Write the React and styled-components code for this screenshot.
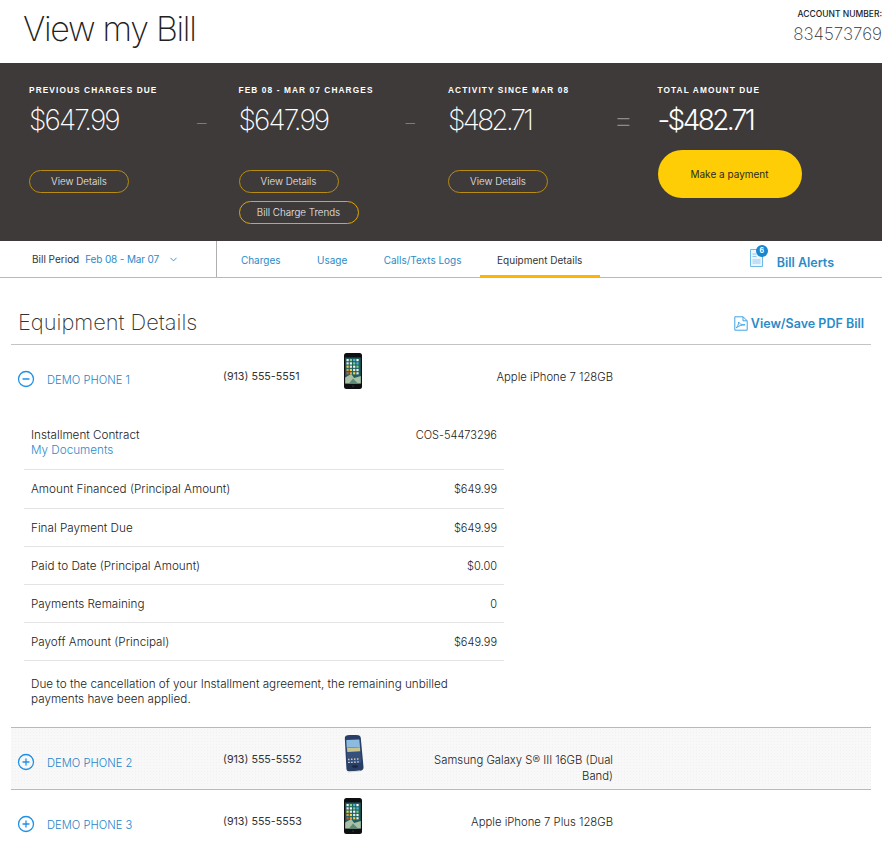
import { createGlobalStyle } from "styled-components";
import styled from "styled-components";
import { ChevronDown, CircleMinus, CirclePlus } from "lucide-react";

const GlobalStyle = createGlobalStyle`
  html, body {
    margin: 0;
    background: #fff;
    color: #333;
    font-family: Inter, "Liberation Sans", sans-serif;
    font-size: 12px;
    overflow-x: hidden;
  }
  * { box-sizing: border-box; }
`;

const BLUE = "#2a8bc9";

const Header = styled.header`
  height: 63px;
  padding-left: 23px;
  display: flex;
  justify-content: space-between;
`;
const Title = styled.h1`
  margin: 9px 0 0;
  font-size: 34px;
  line-height: 40px;
  letter-spacing: -1.3px;
  font-weight: 200;
  color: #222;
`;
const Account = styled.div`
  padding-top: 9px;
  text-align: right;
  width: 100px;
`;
const AccountLabel = styled.div`
  font-size: 8.5px;
  line-height: 11px;
  font-weight: 500;
  color: #222;
  white-space: nowrap;
`;
const AccountNumber = styled.div`
  margin-top: 4px;
  font-size: 17px;
  line-height: 20px;
  font-weight: 200;
  color: #333;
`;

const Summary = styled.section`
  height: 178px;
  background: #3e3a39;
  padding: 21px 0 0 29px;
  display: grid;
  grid-template-columns: repeat(4, 209.5px);
`;
const SummaryCol = styled.div`
  position: relative;
  display: flex;
  flex-direction: column;
  align-items: flex-start;
`;
const SummaryLabel = styled.div`
  font-family: "Liberation Sans", sans-serif;
  font-size: 8.3px;
  line-height: 12px;
  font-weight: 700;
  letter-spacing: 1.1px;
  color: #fff;
  white-space: nowrap;
`;
const Amount = styled.div`
  margin-top: 6px;
  height: 44px;
  font-size: 28px;
  line-height: 36px;
  letter-spacing: ${(p) => p.$spacing}px;
  font-weight: ${(p) => (p.$strong ? 300 : 200)};
  color: #fff;
`;
const Operator = styled.span`
  position: absolute;
  top: ${(p) => p.$top}px;
  left: ${(p) => p.$left}px;
  font-size: ${(p) => p.$size}px;
  line-height: 36px;
  font-weight: 200;
  color: #8d8a89;
`;
const OutlineButton = styled.button`
  width: ${(p) => p.$width}px;
  height: 23px;
  margin-top: ${(p) => p.$top}px;
  border: 1px solid ${(p) => (p.$bright ? "#e0a800" : "#b88c12")};
  border-radius: 12px;
  background: transparent;
  color: #eee;
  font: 300 9.8px/20px Inter, "Liberation Sans", sans-serif;
  padding: 0;
`;
const PayButton = styled.button`
  width: 144px;
  height: 48px;
  margin-top: 4px;
  border: 0;
  border-radius: 24px;
  background: #ffcd05;
  color: #2d2a20;
  font: 400 10px/48px Inter, "Liberation Sans", sans-serif;
  padding: 0;
`;

const Nav = styled.nav`
  height: 37px;
  border-bottom: 1px solid #b9b9b9;
  display: flex;
  font-size: 10px;
`;
const Period = styled.div`
  width: 217px;
  border-right: 1px solid #b0b0b0;
  padding-left: 32px;
  display: flex;
  align-items: center;
  gap: 6px;
  color: #333;
`;
const PeriodValue = styled.span`
  color: ${BLUE};
  margin-right: 3px;
  letter-spacing: -0.15px;
`;
const Tabs = styled.div`
  display: flex;
  padding-left: 5.7px;
`;
const Tab = styled.a`
  padding: 0 18.2px;
  margin-bottom: -1px;
  display: flex;
  align-items: center;
  justify-content: center;
  height: 37px;
  border-top: 3px solid transparent;
  width: ${(p) => (p.$width ? `${p.$width}px` : "auto")};
  color: ${(p) => (p.$active ? "#333" : BLUE)};
  border-bottom: 3px solid ${(p) => (p.$active ? "#ffb400" : "transparent")};
  white-space: nowrap;
`;
const Alerts = styled.a`
  margin-left: 150px;
  display: flex;
  align-items: center;
  gap: 14px;
  color: ${BLUE};
  font-size: 12.5px;
  font-weight: 600;
  padding-top: 6px;
`;
const AlertIcon = styled.span`
  position: relative;
  display: block;
  width: 13px;
  height: 18px;
  margin-top: -8px;
`;
const AlertBadge = styled.span`
  position: absolute;
  top: -4px;
  left: 6px;
  width: 12px;
  height: 12px;
  border-radius: 50%;
  background: #1a86d0;
  color: #fff;
  font-size: 7px;
  line-height: 12px;
  font-weight: 700;
  text-align: center;
`;

const Main = styled.main`
  margin: 0 11px;
`;
const SectionHead = styled.div`
  height: 67px;
  border-bottom: 1px solid #c4c4c4;
  padding: 22px 7px 0;
  display: flex;
  align-items: center;
  justify-content: space-between;
`;
const SectionTitle = styled.h2`
  margin: 0;
  font-size: 21.8px;
  font-weight: 200;
  color: #333;
`;
const PdfLink = styled.a`
  display: flex;
  align-items: center;
  gap: 3px;
  padding-top: 2px;
  color: ${BLUE};
  font-size: 12.5px;
  font-weight: 600;
`;

const PhoneRow = styled.div`
  display: grid;
  grid-template-columns: 29px 176px 121px 76px 193px;
  align-items: start;
  padding: 8px 0 0 7px;
  min-height: ${(p) => p.$height}px;
  ${(p) => p.$shaded && `
    background-color: #f8f8f8;
    background-image: radial-gradient(#f1f1f1 0.6px, transparent 0.7px);
    background-size: 3px 3px;
    border-top: 1px solid #b9b9b9;
    border-bottom: 1px solid #b9b9b9;
  `}
`;
const Toggle = styled.span`
  margin: 17px 0 0 -1px;
  color: #1e90e6;
  display: block;
  line-height: 0;
`;
const PhoneName = styled.a`
  margin-top: 19px;
  line-height: 16px;
  font-size: 11.2px;
  font-weight: 300;
  color: #1f84c8;
`;
const PhoneNumber = styled.div`
  margin-top: 16px;
  line-height: 16px;
  font-size: 10.7px;
`;
const Device = styled.div`
  margin-top: 16px;
  line-height: 16px;
  font-size: 11.3px;
  font-weight: 300;
  color: #222;
  text-align: right;
`;
const PhoneImage = styled.div`
  margin-top: ${(p) => p.$offset || 0}px;
  line-height: 0;
`;

const Details = styled.div`
  width: 480px;
  margin-left: 13px;
`;
const DetailRow = styled.div`
  display: flex;
  justify-content: space-between;
  align-items: ${(p) => (p.$top ? "flex-start" : "center")};
  height: ${(p) => p.$height || 38}px;
  padding: ${(p) => (p.$top ? "21px 7px 0" : "0 7px")};
  border-bottom: 1px solid #e4e4e4;
  line-height: 16px;
  font-size: 11.7px;
  font-weight: 300;
  color: #222;
`;
const DetailValue = styled.span`
  font-size: 11px;
`;
const DocLink = styled.a`
  display: block;
  margin-top: -1px;
  color: ${BLUE};
`;
const Note = styled.p`
  margin: 0;
  width: 440px;
  padding: 16px 0 20px 7px;
  font-size: 11.7px;
  font-weight: 300;
  line-height: 15px;
  color: #222;
`;

function PdfIcon() {
  return (
    <svg width="14" height="15" viewBox="0 0 14 15" fill="none" stroke="#3fa4e6" strokeWidth="1">
      <path d="M.8.8h8.400l4 4v9.400H.8z" />
      <path d="M9 .8v4h4" />
      <path d="M2 12c1.600-1.400 2.600-3.600 2.600-6 .8 1.600 2 2.600 6.400 2.800-3 .1-6.300.8-9 3.200z" />
    </svg>
  );
}

function BillIcon() {
  return (
    <svg width="13" height="18" viewBox="0 0 13 18">
      <path d="M.5.5h9l3 3v14H.5z" fill="#eaf5fc" stroke="#6db9ea" />
      <path d="M2.500 5h4M2.500 7.500h4" stroke="#8cc8ee" />
      <rect x="2.500" y="10" width="8" height="5" fill="#bfe0f5" />
    </svg>
  );
}

const APP_COLORS = ["#f4f4f4", "#e8a13a", "#4fb6e8", "#e9e9e9", "#d9534a", "#7fd08a", "#f2d04a", "#ffffff"];

function IPhone() {
  const apps = [];
  for (let r = 0; r < 5; r++) {
    for (let c = 0; c < 4; c++) {
      apps.push(
        <rect
          key={`${r}-${c}`}
          x={2.5 + c * 3.3}
          y={6 + r * 3.3}
          width="2.2"
          height="2.2"
          fill={APP_COLORS[(r * 3 + c * 5) % APP_COLORS.length]}
        />
      );
    }
  }
  return (
    <svg width="18" height="36" viewBox="0 0 18 36">
      <rect x="0" y="0" width="18" height="36" rx="2.5" fill="#0e0f12" />
      <rect x="1.2" y="4.5" width="15.6" height="26" fill="#1f5f5c" />
      <path d="M1.2 30.500v-6l6-3.500 3 4 6.600-2v7.500z" fill="#a9bfa6" />
      <path d="M5 30.500l4-5 5 5z" fill="#5e8a78" />
      {apps}
      <circle cx="9" cy="33.2" r="1" fill="#2a2b30" />
    </svg>
  );
}

function GalaxyPhone() {
  return (
    <svg width="20" height="38" viewBox="0 0 20 38">
      <path d="M.8 3C.8 1 2.500 0 5.500 0h7c3 0 4 1 4.300 3l2.700 29c.2 2-1 3.500-3.500 3.700l-10 .8c-2.500.2-3.500-1-3.600-3z" fill="#2a3f66" />
      <path d="M2.300 5l13-.6 2 23-13.800.8z" fill="#34507c" />
      <path d="M2.300 5l13-.6.7 7.600-13.300.8z" fill="#8dbbe0" />
      <path d="M3 13l13-.8.3 4-13 .8z" fill="#c6c48c" />
      <path d="M4 24.500l12-.7" stroke="#f0c48a" strokeWidth="1.5" strokeDasharray="1.5 1.5" />
      <path d="M4.200 27.500l12-.7" stroke="#e6edf3" strokeWidth="1.2" strokeDasharray="1.5 1.5" />
      <ellipse cx="11" cy="31.5" rx="3" ry="1.2" fill="#18263f" />
      <path d="M4 37l12-1" stroke="#d6d6d6" strokeWidth="1" />
    </svg>
  );
}

const details = [
  ["Amount Financed (Principal Amount)", "$649.99", 39],
  ["Final Payment Due", "$649.99", 38],
  ["Paid to Date (Principal Amount)", "$0.00", 38],
  ["Payments Remaining", "0", 38],
  ["Payoff Amount (Principal)", "$649.99", 38],
];

export default function App() {
  return (
    <>
      <GlobalStyle />
      <Header>
        <Title>View my Bill</Title>
        <Account>
          <AccountLabel>ACCOUNT NUMBER:</AccountLabel>
          <AccountNumber>834573769</AccountNumber>
        </Account>
      </Header>

      <Summary>
        <SummaryCol>
          <SummaryLabel>PREVIOUS CHARGES DUE</SummaryLabel>
          <Amount $spacing={-1.9}>$647.99</Amount>
          <Operator $left={168} $top={21} $size={19}>–</Operator>
          <OutlineButton $width={100} $top={24}>View Details</OutlineButton>
        </SummaryCol>
        <SummaryCol>
          <SummaryLabel>FEB 08 - MAR 07 CHARGES</SummaryLabel>
          <Amount $spacing={-1.9}>$647.99</Amount>
          <Operator $left={167} $top={21} $size={19}>–</Operator>
          <OutlineButton $width={100} $top={24}>View Details</OutlineButton>
          <OutlineButton $width={120} $top={8} $bright>Bill Charge Trends</OutlineButton>
        </SummaryCol>
        <SummaryCol>
          <SummaryLabel>ACTIVITY SINCE MAR 08</SummaryLabel>
          <Amount $spacing={-2.7}>$482.71</Amount>
          <Operator $left={165} $top={18} $size={32}>=</Operator>
          <OutlineButton $width={100} $top={24}>View Details</OutlineButton>
        </SummaryCol>
        <SummaryCol>
          <SummaryLabel>TOTAL AMOUNT DUE</SummaryLabel>
          <Amount $strong $spacing={-2.6}>-$482.71</Amount>
          <PayButton>Make a payment</PayButton>
        </SummaryCol>
      </Summary>

      <Nav>
        <Period>
          Bill Period <PeriodValue>Feb 08 - Mar 07</PeriodValue>
          <ChevronDown size={11} color={BLUE} strokeWidth={2} />
        </Period>
        <Tabs>
          <Tab>Charges</Tab>
          <Tab>Usage</Tab>
          <Tab>Calls/Texts Logs</Tab>
          <Tab $active $width={120}>Equipment Details</Tab>
        </Tabs>
        <Alerts>
          <AlertIcon>
            <BillIcon />
            <AlertBadge>6</AlertBadge>
          </AlertIcon>
          Bill Alerts
        </Alerts>
      </Nav>

      <Main>
        <SectionHead>
          <SectionTitle>Equipment Details</SectionTitle>
          <PdfLink>
            <PdfIcon />
            View/Save PDF Bill
          </PdfLink>
        </SectionHead>

        <PhoneRow $height={61}>
          <Toggle><CircleMinus size={18} strokeWidth={1.7} /></Toggle>
          <PhoneName>DEMO PHONE 1</PhoneName>
          <PhoneNumber>(913) 555-5551</PhoneNumber>
          <PhoneImage><IPhone /></PhoneImage>
          <Device>Apple iPhone 7 128GB</Device>
        </PhoneRow>

        <Details>
          <DetailRow $top $height={64}>
            <div>
              Installment Contract
              <DocLink>My Documents</DocLink>
            </div>
            <DetailValue>COS-54473296</DetailValue>
          </DetailRow>
          {details.map(([label, value, height]) => (
            <DetailRow key={label} $height={height}>
              <span>{label}</span>
              <DetailValue>{value}</DetailValue>
            </DetailRow>
          ))}
          <Note>
            Due to the cancellation of your Installment agreement, the remaining unbilled payments
            have been applied.
          </Note>
        </Details>

        <PhoneRow $height={63} $shaded>
          <Toggle><CirclePlus size={18} strokeWidth={1.7} /></Toggle>
          <PhoneName>DEMO PHONE 2</PhoneName>
          <PhoneNumber>(913) 555-5552</PhoneNumber>
          <PhoneImage $offset={-1}><GalaxyPhone /></PhoneImage>
          <Device>Samsung Galaxy S® III 16GB (Dual Band)</Device>
        </PhoneRow>

        <PhoneRow $height={63}>
          <Toggle><CirclePlus size={18} strokeWidth={1.7} /></Toggle>
          <PhoneName>DEMO PHONE 3</PhoneName>
          <PhoneNumber>(913) 555-5553</PhoneNumber>
          <PhoneImage><IPhone /></PhoneImage>
          <Device>Apple iPhone 7 Plus 128GB</Device>
        </PhoneRow>
      </Main>
    </>
  );
}
